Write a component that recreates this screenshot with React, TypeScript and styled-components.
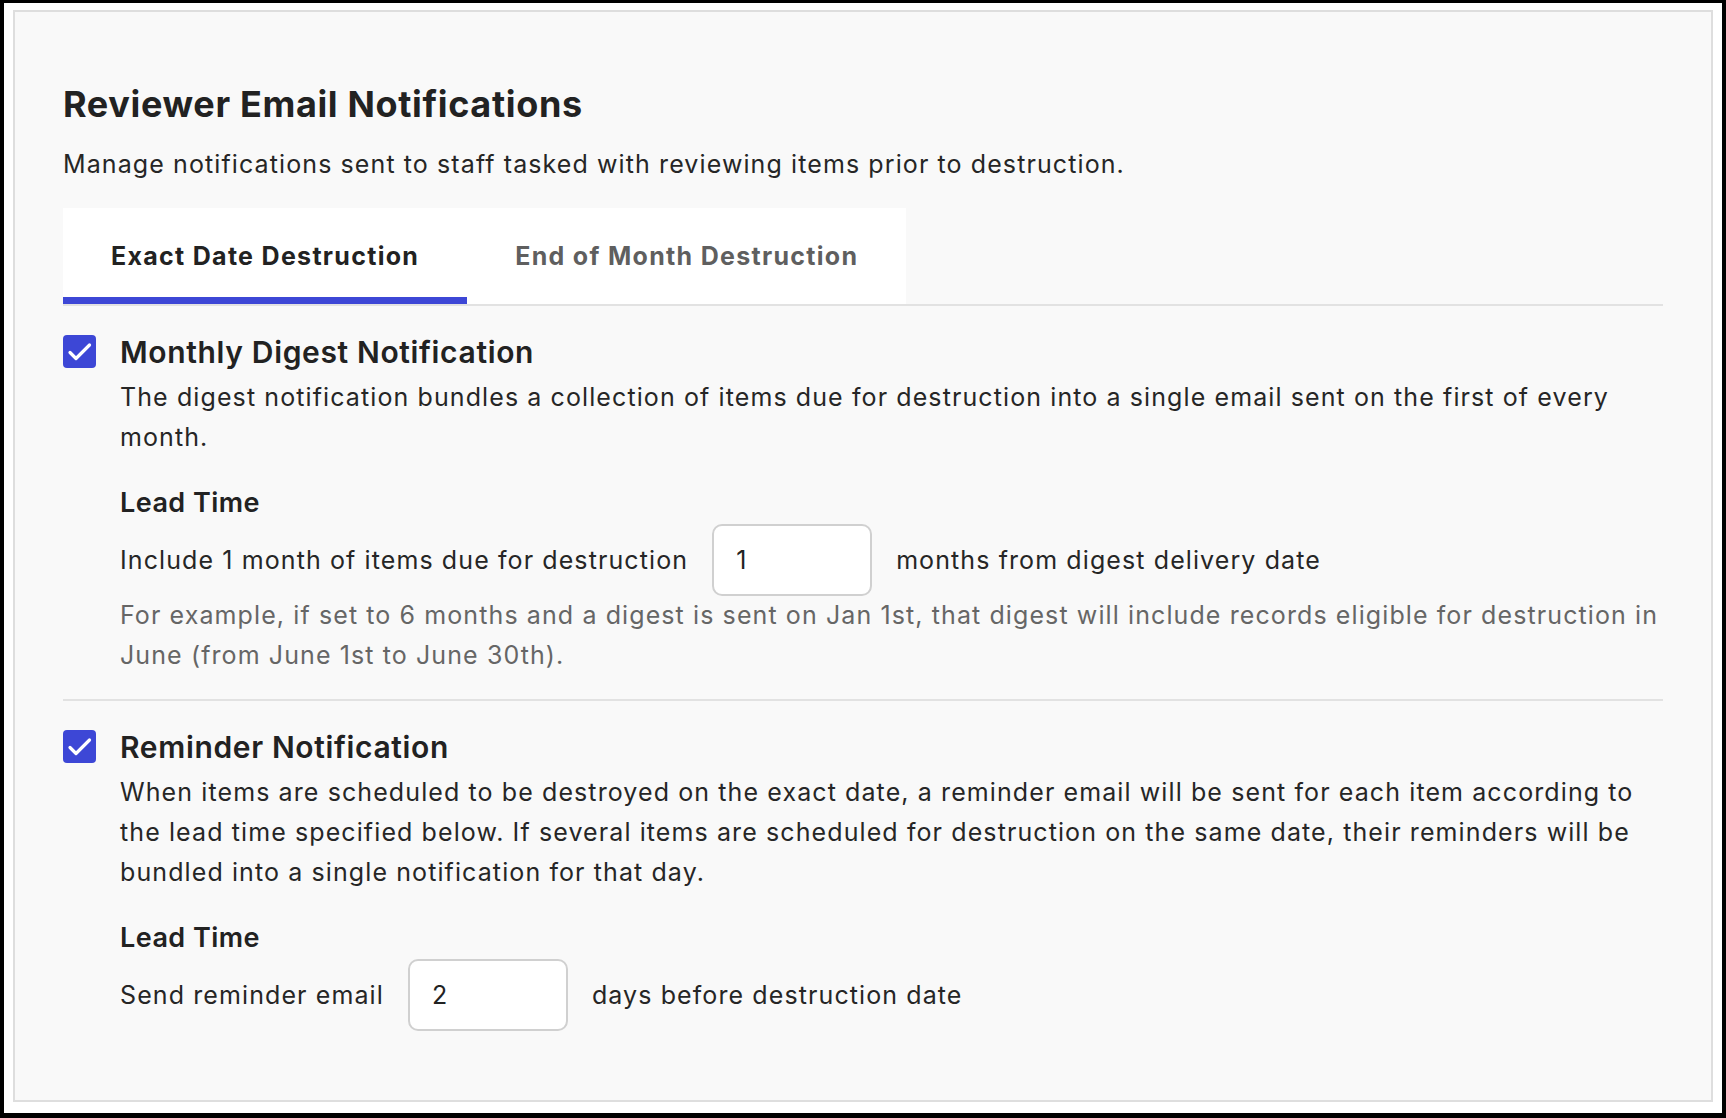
import { useState } from "react";
import styled, { createGlobalStyle } from "styled-components";

const GlobalStyle = createGlobalStyle`
  * {
    box-sizing: border-box;
  }
  body {
    margin: 0;
    background: #000;
    font-family: Inter, "Liberation Sans", Arial, sans-serif;
    color: #222;
  }
`;

type TabKey = "exact" | "month";

export default function App() {
  const [tab, setTab] = useState<TabKey>("exact");
  const [digestOn, setDigestOn] = useState(true);
  const [reminderOn, setReminderOn] = useState(true);
  const [months, setMonths] = useState("1");
  const [days, setDays] = useState("2");

  return (
    <>
      <GlobalStyle />
      <Frame>
        <Panel>
          <Title>Reviewer Email Notifications</Title>
          <Subtitle>
            Manage notifications sent to staff tasked with reviewing items prior to destruction.
          </Subtitle>

          <TabList>
            <Tab $active={tab === "exact"} onClick={() => setTab("exact")}>
              Exact Date Destruction
            </Tab>
            <Tab $active={tab === "month"} onClick={() => setTab("month")}>
              End of Month Destruction
            </Tab>
          </TabList>

          <Section $divided>
            <Check checked={digestOn} onToggle={() => setDigestOn(!digestOn)} />
            <Body>
              <Heading>Monthly Digest Notification</Heading>
              <Description>
                The digest notification bundles a collection of items due for destruction into a
                single email sent on the first of every month.
              </Description>
              <LeadLabel>Lead Time</LeadLabel>
              <LeadRow>
                <span>Include 1 month of items due for destruction</span>
                <NumberInput value={months} onChange={(e) => setMonths(e.target.value)} />
                <span>months from digest delivery date</span>
              </LeadRow>
              <Hint>
                For example, if set to 6 months and a digest is sent on Jan 1st, that digest will
                include records eligible for destruction in June (from June 1st to June 30th).
              </Hint>
            </Body>
          </Section>

          <Section>
            <Check checked={reminderOn} onToggle={() => setReminderOn(!reminderOn)} />
            <Body>
              <Heading>Reminder Notification</Heading>
              <Description>
                When items are scheduled to be destroyed on the exact date, a reminder email will be
                sent for each item according to the lead time specified below. If several items are
                scheduled for destruction on the same date, their reminders will be bundled into a
                single notification for that day.
              </Description>
              <LeadLabel>Lead Time</LeadLabel>
              <LeadRow>
                <span>Send reminder email</span>
                <NumberInput value={days} onChange={(e) => setDays(e.target.value)} />
                <span>days before destruction date</span>
              </LeadRow>
            </Body>
          </Section>
        </Panel>
      </Frame>
    </>
  );
}

function Check({ checked, onToggle }: { checked: boolean; onToggle: () => void }) {
  return (
    <CheckBox role="checkbox" aria-checked={checked} $checked={checked} onClick={onToggle}>
      {checked && (
        <svg width="33" height="33" viewBox="0 0 33 33">
          <path
            d="M7 17.5 L13 23.5 L26.5 10"
            fill="none"
            stroke="#fff"
            strokeWidth="3.2"
            strokeLinecap="round"
            strokeLinejoin="round"
          />
        </svg>
      )}
    </CheckBox>
  );
}

const Frame = styled.div`
  height: 1118px;
  border-style: solid;
  border-color: #000;
  border-width: 3px 4px 5px 4px;
  background: #fff;
  padding: 7px 9px 11px 9px;
`;

const Panel = styled.div`
  height: 100%;
  border: 2px solid #dedede;
  background: #f9f9f9;
  padding: 70px 48px 48px 48px;
`;

const Title = styled.h2`
  margin: 0;
  font-size: 36px;
  line-height: 44px;
  font-weight: 700;
  letter-spacing: 0.65px;
  color: #222;
`;

const Subtitle = styled.p`
  margin: 20px 0 0;
  font-size: 25px;
  line-height: 36px;
  letter-spacing: 1.1px;
  color: #262626;
`;

const TabList = styled.div`
  display: flex;
  margin-top: 26px;
  border-bottom: 2px solid #e2e2e2;
`;

const Tab = styled.button<{ $active: boolean }>`
  background: #fff;
  border: none;
  border-bottom: 7px solid ${(p) => (p.$active ? "#3d47d6" : "transparent")};
  padding: 30px 48px 23px;
  font-family: inherit;
  font-size: 25px;
  line-height: 36px;
  font-weight: 700;
  letter-spacing: 1.3px;
  color: ${(p) => (p.$active ? "#222" : "#5f5f5f")};
  cursor: pointer;
`;

const Section = styled.div<{ $divided?: boolean }>`
  display: grid;
  grid-template-columns: 33px 1fr;
  column-gap: 24px;
  padding: 28px 0 ${(p) => (p.$divided ? "24px" : "25px")};
  border-bottom: ${(p) => (p.$divided ? "2px solid #e2e2e2" : "none")};
`;

const CheckBox = styled.div<{ $checked: boolean }>`
  width: 33px;
  height: 33px;
  margin-top: 1px;
  border-radius: 4px;
  background: ${(p) => (p.$checked ? "#3d47d6" : "#fff")};
  border: ${(p) => (p.$checked ? "none" : "2px solid #bbb")};
  cursor: pointer;
  svg {
    display: block;
  }
`;

const Body = styled.div`
  display: flex;
  flex-direction: column;
`;

const Heading = styled.h3`
  margin: 0;
  font-size: 30px;
  line-height: 36px;
  font-weight: 600;
  letter-spacing: 0.65px;
  color: #222;
`;

const Description = styled.p`
  margin: 8px 0 0;
  font-size: 25px;
  line-height: 39.6px;
  letter-spacing: 1.1px;
  color: #262626;
`;

const LeadLabel = styled.h4`
  margin: 28px 0 0;
  font-size: 27px;
  line-height: 36px;
  font-weight: 600;
  letter-spacing: 0.45px;
  color: #222;
`;

const LeadRow = styled.div`
  display: flex;
  align-items: center;
  gap: 24px;
  margin-top: 3px;
  font-size: 25px;
  letter-spacing: 1.1px;
  color: #262626;
`;

const NumberInput = styled.input.attrs({ type: "text", inputMode: "numeric" })`
  width: 160px;
  height: 72px;
  padding: 0 22px;
  border: 2px solid #d0d0d0;
  border-radius: 10px;
  background: #fff;
  font-family: inherit;
  font-size: 25px;
  color: #222;
  outline: none;
`;

const Hint = styled.p`
  margin: 0;
  font-size: 25px;
  line-height: 39.6px;
  letter-spacing: 1.1px;
  color: #666;
`;
